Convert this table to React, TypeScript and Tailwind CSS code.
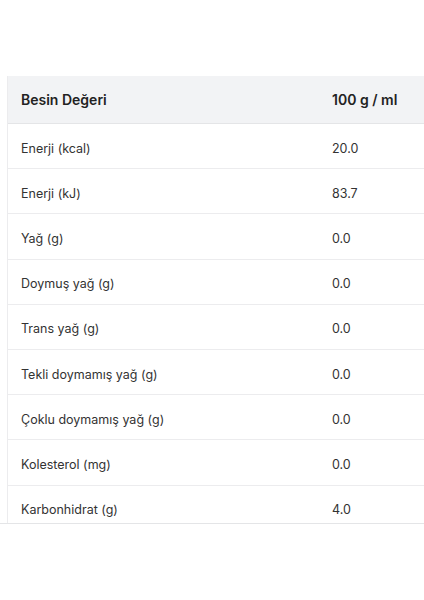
import React from "react";

const rows: [string, string][] = [
  ["Enerji (kcal)", "20.0"],
  ["Enerji (kJ)", "83.7"],
  ["Yağ (g)", "0.0"],
  ["Doymuş yağ (g)", "0.0"],
  ["Trans yağ (g)", "0.0"],
  ["Tekli doymamış yağ (g)", "0.0"],
  ["Çoklu doymamış yağ (g)", "0.0"],
  ["Kolesterol (mg)", "0.0"],
  ["Karbonhidrat (g)", "4.0"],
];

export default function App() {
  return (
    <div className="min-h-[600px] bg-white pt-[76px] font-['Inter','Liberation_Sans',sans-serif]">
      <div className="h-[448px] overflow-hidden border-b border-[#e4e5e7]">
        <div className="ml-[7px] w-[560px] border-l border-[#ececee]">
          <div className="flex h-[48px] items-center border-b border-[#e4e5e7] bg-[#f2f3f5] text-[14px] font-semibold text-[#222]">
            <div className="w-[324px] pl-[13px]">Besin Değeri</div>
            <div>100 g / ml</div>
          </div>
          {rows.map(([label, value], i) => (
            <div
              key={i}
              className="flex h-[45.2px] items-center border-b border-[#ececee] pt-[6px] text-[12.5px] text-[#333]"
            >
              <div className="w-[324px] pl-[13px]">{label}</div>
              <div>{value}</div>
            </div>
          ))}
        </div>
      </div>
    </div>
  );
}
